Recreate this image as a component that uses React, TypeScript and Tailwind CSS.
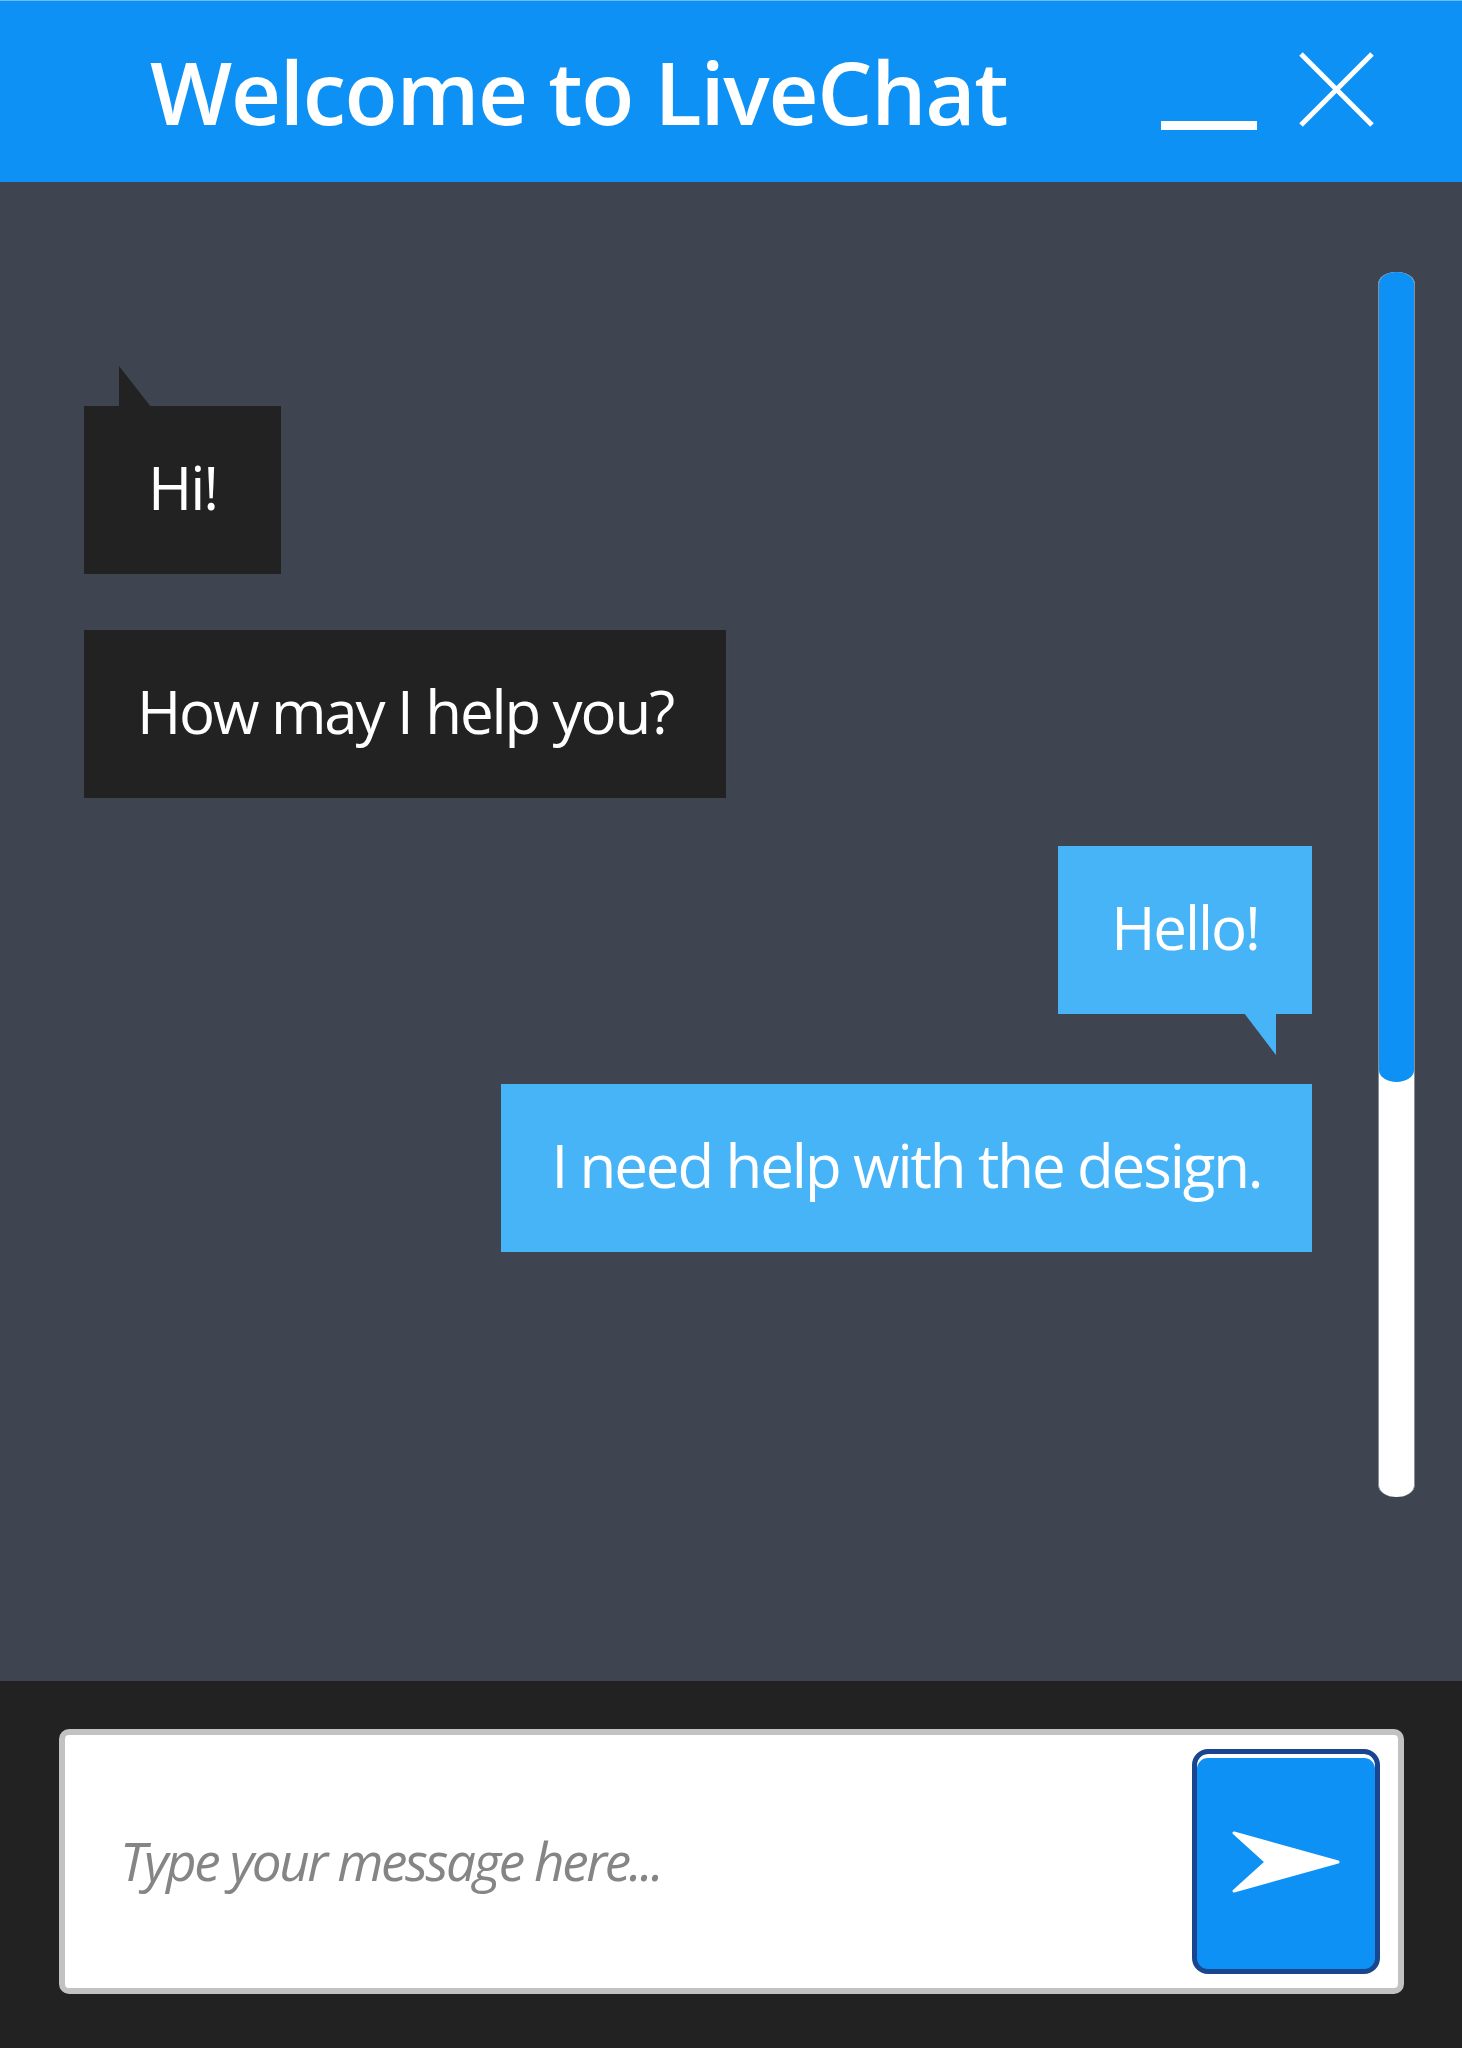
import { Fragment } from 'react';

type Msg = { id: number; text: string; from: 'agent' | 'user'; width: string; tail?: boolean; gap: string };

const messages: Msg[] = [
  { id: 1, text: 'Hi!', from: 'agent', width: 'w-[197px]', tail: true, gap: 'mt-[224px]' },
  { id: 2, text: 'How may I help you?', from: 'agent', width: 'w-[642px]', gap: 'mt-[56px]' },
  { id: 3, text: 'Hello!', from: 'user', width: 'w-[254px]', tail: true, gap: 'mt-[48px]' },
  { id: 4, text: 'I need help with the design.', from: 'user', width: 'w-[811px]', gap: 'mt-[70px]' },
];

function Bubble({ msg }: { msg: Msg }) {
  const agent = msg.from === 'agent';
  return (
    <div
      className={`relative ${msg.width} ${msg.gap} h-[168px] pb-[6px] flex items-center justify-center ${
        agent ? 'self-start bg-[#222222]' : 'self-end bg-[#48b4f8]'
      }`}
    >
      {msg.tail && agent && (
        <svg className="absolute left-[35px] -top-[40px]" width="32" height="41" viewBox="0 0 32 41">
          <polygon points="0,0 0,41 32,41" fill="#222222" />
        </svg>
      )}
      {msg.tail && !agent && (
        <svg className="absolute right-[36px] -bottom-[41px]" width="32" height="42" viewBox="0 0 32 42">
          <polygon points="0,0 32,0 32,42" fill="#48b4f8" />
        </svg>
      )}
      <span className="text-white text-[60px] leading-none tracking-[-0.035em] font-['Open_Sans',sans-serif]">
        {msg.text}
      </span>
    </div>
  );
}

export default function App() {
  return (
    <div className="w-[1462px] h-[2048px] flex flex-col overflow-hidden font-['Open_Sans',sans-serif]">
      {/* header */}
      <div className="h-[182px] bg-[#0e91f5] border-t border-[#6cbaf7] flex items-start pl-[150px] pr-[88px]">
        <h1 className="mt-[47px] text-white text-[87px] leading-none font-semibold tracking-[-0.015em]">
          Welcome to LiveChat
        </h1>
        <div className="flex-1" />
        <div className="mt-[120px] w-[96px] h-[9px] bg-white" />
        <svg className="mt-[51px] ml-[42px]" width="75" height="75" viewBox="0 0 75 75">
          <line x1="2" y1="2" x2="73" y2="73" stroke="white" strokeWidth="5" />
          <line x1="73" y1="2" x2="2" y2="73" stroke="white" strokeWidth="5" />
        </svg>
      </div>

      {/* messages */}
      <div className="h-[1499px] bg-[#3e4550] flex">
        <div className="flex-1 flex flex-col pl-[84px] pr-[66px]">
          {messages.map(m => (
            <Fragment key={m.id}>
              <Bubble msg={m} />
            </Fragment>
          ))}
        </div>
        <div className="mt-[90px] mr-[47px] w-[37px] h-[1225px] bg-white border-x border-[#8a8f96] rounded-tl-[18px_12px] rounded-tr-[18px_12px] rounded-bl-[18px_12px] rounded-br-[18px_12px] overflow-hidden flex flex-col">
          <div className="h-[810px] bg-[#0e91f5] rounded-bl-[18px_12px] rounded-br-[18px_12px]" />
        </div>
      </div>

      {/* input */}
      <div className="flex-1 bg-[#222222] pt-[48px] pl-[59px] pr-[58px]">
        <div className="h-[265px] bg-white border-[6px] border-[#c2c2c2] rounded-[10px] flex items-center pl-[55px] pr-[18px]">
          <span className="flex-1 text-[#858585] italic text-[53px] leading-none tracking-[-0.045em] pb-[2px]">
            Type your message here...
          </span>
          <button className="w-[188px] h-[225px] bg-[#0e91f5] border-[5px] border-[#1a4690] rounded-[16px] shadow-[inset_0_4px_0_#ffffff] flex items-center justify-center">
            <svg width="108" height="62" viewBox="0 0 108 62">
              <polygon
                points="2,2 106,31 2,60 34,31"
                fill="white"
                stroke="white"
                strokeWidth="3"
                strokeLinejoin="round"
              />
            </svg>
          </button>
        </div>
      </div>
    </div>
  );
}
